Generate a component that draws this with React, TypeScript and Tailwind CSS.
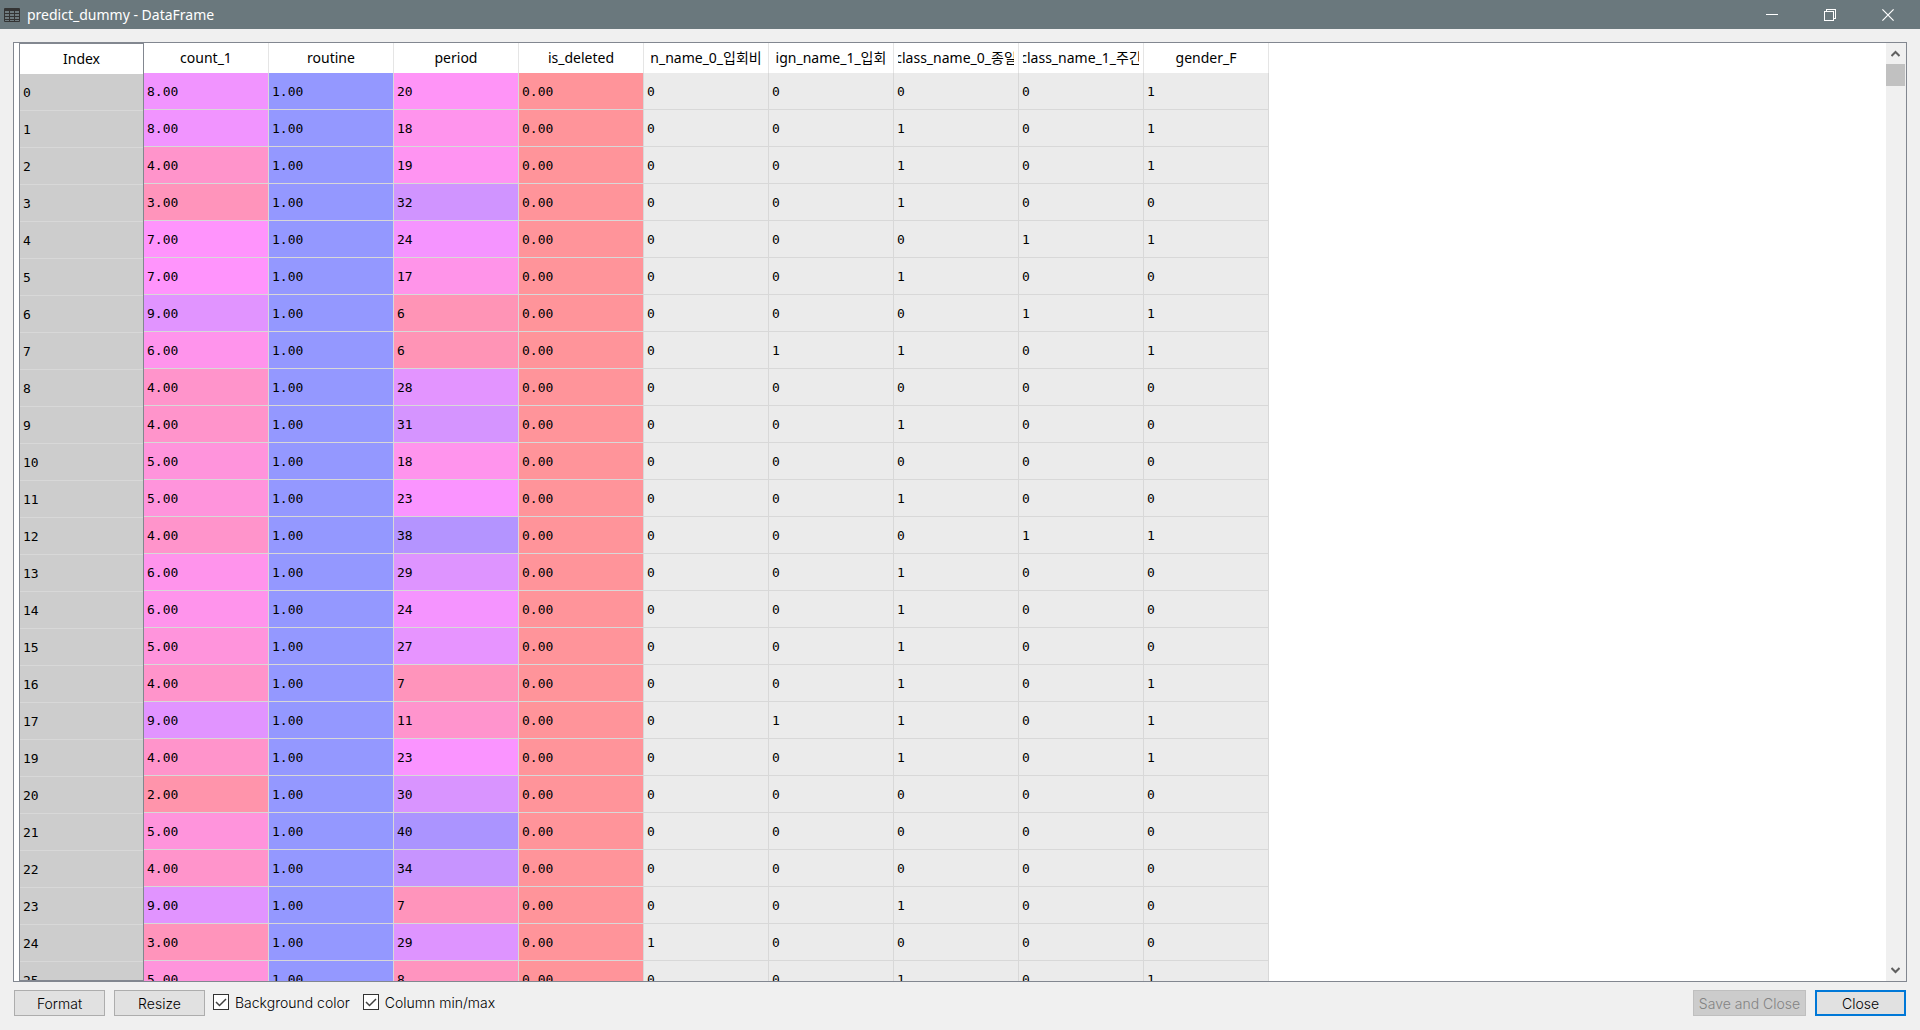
import clsx from "clsx";

const COLUMNS = [
  { name: "count_1", min: 1, max: 14, digits: 2 },
  { name: "routine", min: 0, max: 1, digits: 2 },
  { name: "period", min: 0, max: 46, digits: 0 },
  { name: "is_deleted", min: 0, max: 1, digits: 2 },
  { name: "n_name_0_입회비" },
  { name: "ign_name_1_입회" },
  { name: "class_name_0_종일" },
  { name: "class_name_1_주간" },
  { name: "gender_F" },
];

// index, then one value per column
const ROWS = [
  [0, 8, 1, 20, 0, 0, 0, 0, 0, 1],
  [1, 8, 1, 18, 0, 0, 0, 1, 0, 1],
  [2, 4, 1, 19, 0, 0, 0, 1, 0, 1],
  [3, 3, 1, 32, 0, 0, 0, 1, 0, 0],
  [4, 7, 1, 24, 0, 0, 0, 0, 1, 1],
  [5, 7, 1, 17, 0, 0, 0, 1, 0, 0],
  [6, 9, 1, 6, 0, 0, 0, 0, 1, 1],
  [7, 6, 1, 6, 0, 0, 1, 1, 0, 1],
  [8, 4, 1, 28, 0, 0, 0, 0, 0, 0],
  [9, 4, 1, 31, 0, 0, 0, 1, 0, 0],
  [10, 5, 1, 18, 0, 0, 0, 0, 0, 0],
  [11, 5, 1, 23, 0, 0, 0, 1, 0, 0],
  [12, 4, 1, 38, 0, 0, 0, 0, 1, 1],
  [13, 6, 1, 29, 0, 0, 0, 1, 0, 0],
  [14, 6, 1, 24, 0, 0, 0, 1, 0, 0],
  [15, 5, 1, 27, 0, 0, 0, 1, 0, 0],
  [16, 4, 1, 7, 0, 0, 0, 1, 0, 1],
  [17, 9, 1, 11, 0, 0, 1, 1, 0, 1],
  [19, 4, 1, 23, 0, 0, 0, 1, 0, 1],
  [20, 2, 1, 30, 0, 0, 0, 0, 0, 0],
  [21, 5, 1, 40, 0, 0, 0, 0, 0, 0],
  [22, 4, 1, 34, 0, 0, 0, 0, 0, 0],
  [23, 9, 1, 7, 0, 0, 0, 1, 0, 0],
  [24, 3, 1, 29, 0, 1, 0, 0, 0, 0],
  [25, 5, 1, 8, 0, 0, 0, 1, 0, 1],
];

// red at the column minimum, blue at the maximum
function cellColor(value: number, min: number, max: number) {
  const hue = 0.99 - (0.33 * (value - min)) / (max - min);
  const channel = (n: number) => {
    const k = (n + hue * 6) % 6;
    const c = 1 - 0.7 * Math.max(0, Math.min(k, 4 - k, 1));
    return Math.round(255 * (0.4 + 0.6 * c));
  };
  return `rgb(${channel(5)}, ${channel(3)}, ${channel(1)})`;
}

function TitleBar() {
  return (
    <header className="flex h-[29px] shrink-0 items-center bg-[#6a787d] pl-1 pr-[3px] text-white">
      <svg width="16" height="14" viewBox="0 0 16 14" className="mr-[7px]">
        <rect width="16" height="14" rx="1" fill="#343434" />
        <g fill="#6f7b7f">
          {[3, 6, 9].map((y) =>
            [1, 6, 11].map((x) => <rect key={`${x}-${y}`} x={x} y={y} width="4" height="2" />)
          )}
          <rect x="1" y="12" width="4" height="1" />
          <rect x="6" y="12" width="4" height="1" />
          <rect x="11" y="12" width="4" height="1" />
        </g>
      </svg>
      <h1 className="flex-1 text-[14px] leading-5">predict_dummy - DataFrame</h1>
      <button type="button" aria-label="Minimize" className="flex h-full w-[58px] items-center justify-center">
        <svg width="12" height="12" viewBox="0 0 12 12" shapeRendering="crispEdges">
          <path d="M0 5.5h12" stroke="white" />
        </svg>
      </button>
      <button type="button" aria-label="Restore" className="flex h-full w-[58px] items-center justify-center">
        <svg width="12" height="12" viewBox="0 0 12 12" fill="none" stroke="white" shapeRendering="crispEdges">
          <path d="M0.5 2.5h9v9h-9zM2.5 2.5v-2h9v9h-2" />
        </svg>
      </button>
      <button type="button" aria-label="Close window" className="flex h-full w-[58px] items-center justify-center">
        <svg width="12" height="12" viewBox="0 0 12 12" stroke="white" strokeWidth="1.2">
          <path d="M0.4 0.4l11.2 11.2M11.6 0.4L0.4 11.6" />
        </svg>
      </button>
    </header>
  );
}

function IndexTable() {
  return (
    <div className="w-[125px] shrink-0 overflow-hidden border border-[#828790] bg-[#cdcdcd]">
      <table className="w-full table-fixed border-separate border-spacing-0">
        <thead>
          <tr>
            <th className="h-[30px] bg-white p-0 text-[14px] font-normal leading-5">Index</th>
          </tr>
        </thead>
        <tbody className="font-['DejaVu_Sans_Mono',monospace] text-[13px]">
          {ROWS.map((row) => (
            <tr key={row[0]}>
              <td className="h-[37px] border-b border-[#d8d8d8] p-0 pl-[3px] pt-px">{row[0]}</td>
            </tr>
          ))}
        </tbody>
      </table>
    </div>
  );
}

function DataTable() {
  return (
    <table className="w-[1125px] table-fixed border-separate border-spacing-0 self-start">
      <thead>
        <tr>
          {COLUMNS.map((col) => (
            <th key={col.name} className="h-[30px] border-r border-[#e5e5e5] bg-white p-0 px-1 font-normal">
              <div className="flex justify-center overflow-hidden whitespace-nowrap text-[14px] leading-5">
                <span>{col.name}</span>
              </div>
            </th>
          ))}
        </tr>
      </thead>
      <tbody className="font-['DejaVu_Sans_Mono',monospace] text-[13px]">
        {ROWS.map((row) => (
          <tr key={row[0]}>
            {COLUMNS.map((col, i) => {
              const value = row[i + 1];
              return (
                <td
                  key={col.name}
                  className="h-[37px] border-b border-r border-[#d8d8d8] bg-[#ebebeb] p-0 pl-[3px] pt-px"
                  style={col.max === undefined ? undefined : { backgroundColor: cellColor(value, col.min, col.max) }}
                >
                  {value.toFixed(col.digits ?? 0)}
                </td>
              );
            })}
          </tr>
        ))}
      </tbody>
    </table>
  );
}

function ScrollBar() {
  return (
    <div className="ml-auto flex w-5 shrink-0 flex-col bg-[#f0f0f0]">
      <button type="button" aria-label="Scroll up" className="flex h-[21px] w-[19px] items-center justify-center">
        <svg width="9" height="7" viewBox="0 0 9 7" fill="none" stroke="#606060" strokeWidth="2">
          <path d="M0.5 6l4-4 4 4" />
        </svg>
      </button>
      <div className="h-[22px] w-[19px] bg-[#c1c1c1]" />
      <button type="button" aria-label="Scroll down" className="mt-auto flex h-[21px] w-[19px] items-center justify-center">
        <svg width="9" height="7" viewBox="0 0 9 7" fill="none" stroke="#606060" strokeWidth="2">
          <path d="M0.5 1l4 4 4-4" />
        </svg>
      </button>
    </div>
  );
}

function CheckOption({ label, className }: { label: string; className?: string }) {
  return (
    <label className={clsx("flex items-center gap-[6px] pb-0.5", className)}>
      <span className="relative flex">
        <input
          type="checkbox"
          defaultChecked
          className="peer size-4 appearance-none border border-[#333333] bg-white"
        />
        <svg
          viewBox="0 0 16 16"
          fill="none"
          stroke="#404040"
          strokeWidth="1.5"
          className="pointer-events-none absolute inset-0 hidden size-4 peer-checked:block"
        >
          <path d="M3 8l3.5 3.5L13 5" />
        </svg>
      </span>
      {label}
    </label>
  );
}

const button = "h-[26px] border border-[#adadad] bg-[#e1e1e1]";

export default function App() {
  return (
    <div className="flex h-screen flex-col bg-[#f0f0f0] font-['Noto_Sans','Noto_Sans_CJK_KR',sans-serif] text-black">
      <TitleBar />
      <main className="mx-[13px] mt-[13px] flex min-h-0 flex-1 overflow-hidden border border-[#828790] bg-white pl-[5px]">
        <IndexTable />
        <DataTable />
        <ScrollBar />
      </main>
      <footer className="mx-[14px] mb-[14px] mt-2 flex shrink-0 items-center font-['Inter','Noto_Sans_CJK_KR',sans-serif] text-[14px] font-light">
        <button type="button" className={clsx(button, "w-[91px]")}>
          Format
        </button>
        <button type="button" className={clsx(button, "ml-[9px] w-[91px]")}>
          Resize
        </button>
        <CheckOption label="Background color" className="ml-2" />
        <CheckOption label="Column min/max" className="ml-[13px]" />
        <button
          type="button"
          disabled
          className="ml-auto h-[26px] w-[113px] border border-[#bfbfbf] bg-[#cccccc] text-[#838383]"
        >
          Save and Close
        </button>
        <button type="button" className="ml-[9px] h-[26px] w-[91px] border-2 border-[#0078d7] bg-[#e1e1e1]">
          Close
        </button>
      </footer>
    </div>
  );
}
